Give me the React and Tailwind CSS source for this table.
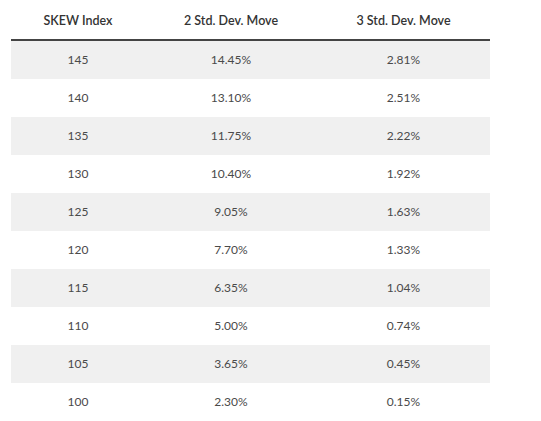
const rows = [
  ["145", "14.45%", "2.81%"],
  ["140", "13.10%", "2.51%"],
  ["135", "11.75%", "2.22%"],
  ["130", "10.40%", "1.92%"],
  ["125", "9.05%", "1.63%"],
  ["120", "7.70%", "1.33%"],
  ["115", "6.35%", "1.04%"],
  ["110", "5.00%", "0.74%"],
  ["105", "3.65%", "0.45%"],
  ["100", "2.30%", "0.15%"],
];

export default function App() {
  return (
    <div className="bg-white w-[541px] h-[421px] pl-[11px] font-['Lato',sans-serif] text-[12px]">
      <div className="w-[479px]">
        <div className="grid grid-cols-[134px_172px_173px] h-[41px] pt-[4px] items-center text-center text-[12.5px] font-semibold text-[#333] border-b-2 border-[#444]">
          <div>SKEW Index</div>
          <div>2 Std. Dev. Move</div>
          <div>3 Std. Dev. Move</div>
        </div>
        {rows.map((r, i) => (
          <div
            key={r[0]}
            className={
              "grid grid-cols-[134px_172px_173px] h-[38px] items-center text-center text-[#4a4a4a] " +
              (i % 2 === 0 ? "bg-[#f0f0f0]" : "bg-white")
            }
          >
            <div>{r[0]}</div>
            <div>{r[1]}</div>
            <div>{r[2]}</div>
          </div>
        ))}
      </div>
    </div>
  );
}
